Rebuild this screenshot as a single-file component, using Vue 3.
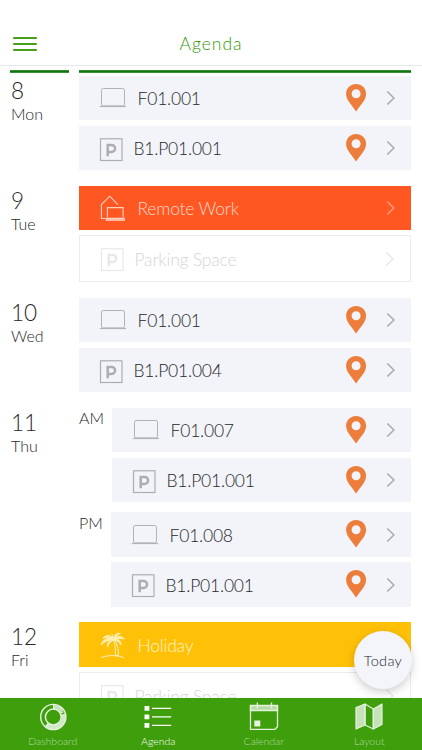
<script setup>
const desk = (label) => ({ kind: 'desk', label })
const park = (label) => ({ kind: 'parking', label })
const free = () => ({ kind: 'parking', label: 'Parking Space', tone: 'empty' })

const days = [
  { num: 8, name: 'Mon', slots: [{ rows: [desk('F01.001'), park('B1.P01.001')] }] },
  { num: 9, name: 'Tue', slots: [{ rows: [{ kind: 'home', label: 'Remote Work', tone: 'remote' }, free()] }] },
  { num: 10, name: 'Wed', slots: [{ rows: [desk('F01.001'), park('B1.P01.004')] }] },
  {
    num: 11,
    name: 'Thu',
    slots: [
      { part: 'AM', rows: [desk('F01.007'), park('B1.P01.001')] },
      { part: 'PM', rows: [desk('F01.008'), park('B1.P01.001')] },
    ],
  },
  { num: 12, name: 'Fri', slots: [{ rows: [{ kind: 'palm', label: 'Holiday', tone: 'holiday' }, free()] }] },
]
const tabs = ['Dashboard', 'Agenda', 'Calendar', 'Layout']
</script>

<template>
  <div class="screen">
    <header class="header">
      <button class="menu" aria-label="Menu"><i></i><i></i><i></i></button>
      <h1>Agenda</h1>
    </header>

    <main class="agenda">
      <div class="rules"><span></span><span></span></div>
      <section v-for="day in days" :key="day.num" class="day">
        <div class="date">
          <div class="num">{{ day.num }}</div>
          <div class="name">{{ day.name }}</div>
        </div>
        <div class="slots">
          <div v-for="(slot, s) in day.slots" :key="s" class="slot" :class="slot.part">
            <div v-if="slot.part" class="part">{{ slot.part }}</div>
            <div class="rows">
              <div v-for="row in slot.rows" :key="row.label" class="row" :class="[row.kind, row.tone]">
                <svg v-if="row.kind === 'desk'" class="icon" width="28" height="22" viewBox="0 0 28 22" fill="none" stroke="#b2b2b6">
                  <rect x="2.5" y="1.5" width="23" height="17.4" rx="1.8" />
                  <path d="M.7 19.5H27" stroke-width="1.2" />
                </svg>
                <svg v-else-if="row.kind === 'parking'" class="icon" width="24" height="24" viewBox="0 0 24 24" fill="none" stroke="currentColor">
                  <rect x="1.5" y="0.8" width="21.5" height="21.7" stroke-width="1.2" />
                  <path d="M8.7 18.3V6.900h3.900a3.500 3.500 0 0 1 0 7H8.700" stroke-width="2.500" />
                </svg>
                <svg v-else-if="row.kind === 'home'" class="icon" width="28" height="28" viewBox="0 0 28 28" fill="none" stroke="#ffd0c0" stroke-width="1.100">
                  <path d="M6.400 24.500H2.400V10.600L10.800 2.200l8 8.400" />
                  <path d="M8.400 23.200V13.600h15.700v9.600" />
                  <path d="M7.200 24.400h18.200v1.900h-18.200z" fill="#ffb499" />
                </svg>
                <svg v-else class="icon" width="28" height="28" viewBox="0 0 28 28" fill="none" stroke="#fff3c9" stroke-width=".9" stroke-linecap="round" stroke-linejoin="round">
                  <g fill="#ffe9a0">
                    <path d="M14 7C11 3.800 6.500 3.800 4 7.200c3-.9 6-.9 9.500.8" />
                    <path d="M13.500 7.500C8 6.800 3.200 9 2.400 13.600 5.500 10.500 9 9 13.500 8.600" />
                    <path d="M13.700 8.400c-4 1.100-6 4-5.200 7.600 1-3.400 2.700-5.200 5.600-7" />
                    <path d="M14.500 7C15 4 17.800 1.800 21.300 2.500c-2.300.7-4 2.100-5.300 4.200" />
                    <path d="M15 7.200c3.500-2.600 8-2.200 10.500.9-3.200-.9-6-.9-9.800.2" />
                    <path d="M15.200 8.200c4-.5 6.800 1.700 6.800 5.700-1.500-2.600-3.600-4.200-6.800-5" />
                    <path d="M14.300 6.600 12.800 3" />
                  </g>
                  <path d="M14.200 8.500c2.200 4.500 2.500 10 2.300 16h3c.2-6-1-11.500-4-15.700M2.500 26.500c6-2.600 15-2.500 22 0" />
                </svg>
                <span class="label">{{ row.label }}</span>
                <svg v-if="!row.tone" class="pin" width="22" height="29" viewBox="0 0 22 29">
                  <path fill="#ed7d3a" fill-rule="evenodd" d="M11.1.1C5.500.1 1.100 4.400 1.100 9.800c0 5.700 4.700 10.300 10 17.700 5.300-7.400 10-12 10-17.700C21.100 4.400 16.700.1 11.100.1Zm0 5.200a4.500 4.500 0 1 1 0 9 4.500 4.500 0 0 1 0-9Z" />
                </svg>
                <svg class="chevron" width="10" height="16" viewBox="0 0 10 16" fill="none" stroke="currentColor" stroke-width="1.500">
                  <path d="M1.300 1.500 7.900 8l-6.600 6.500" />
                </svg>
              </div>
            </div>
          </div>
        </div>
      </section>
    </main>

    <button class="today">Today</button>

    <nav class="tabs">
      <div v-for="tab in tabs" :key="tab" class="tab" :class="{ active: tab === 'Agenda' }">
        <svg v-if="tab === 'Dashboard'" width="30" height="30" viewBox="0 0 30 30" fill="none" stroke="#e4f2de">
          <path d="M16 4.800A10.300 10.300 0 0 1 23.900 9.400" stroke="#c5e2b9" stroke-width="4.600" />
          <path d="M25.200 12A10.300 10.300 0 0 1 8.500 22.800" stroke="#d2e9c8" stroke-width="4.600" />
          <circle cx="15.300" cy="15" r="12.600" stroke-width="1.400" />
          <circle cx="15.300" cy="15" r="7.900" stroke-width="1.500" />
          <path d="M15.600 2.500v4.800M22 11.500l3.500-1.900M10.300 21.200l-2.500 3.500" stroke-width="1.200" />
        </svg>
        <svg v-else-if="tab === 'Agenda'" width="30" height="30" viewBox="0 0 30 30" fill="#fff">
          <path d="M1.500 4h4.800v4.800H1.500zM1.500 12.500h4.800v4.800H1.500zM1.500 21h4.800v4.800H1.500zM9 5.800h19.200v1.200H9zM9 14.300h19.200v1.200H9zM9 22.800h19.200v1.200H9z" />
        </svg>
        <svg v-else-if="tab === 'Calendar'" width="30" height="30" viewBox="0 0 30 30" fill="none" stroke="#e4f2de" stroke-width="1.300">
          <path d="M1.500 3.500h27v5h-27z" fill="#b5daa5" />
          <path d="M1.500 3.500v23.800h24.500l2.500-2.500V3.500M8.300.500v6M22.500.500v6" />
          <path d="M5.300 18.500h6v6h-6z" fill="#e4f2de" stroke="none" />
        </svg>
        <svg v-else width="30" height="30" viewBox="0 0 30 30" stroke="#e4f2de" stroke-width="1.200" stroke-linejoin="round">
          <path d="M2 5.500 11 2v21L2 27ZM19.300 7 28 2v20.500l-8.700 4.500Z" fill="#c5e2b9" />
          <path d="m11 2 8.300 5v20L11 23Z" fill="none" />
        </svg>
        <span>{{ tab }}</span>
      </div>
    </nav>
  </div>
</template>

<style>
body {
  margin: 0;
  background: #fff;
}
</style>

<style scoped>
.screen {
  position: relative;
  width: 422px;
  height: 750px;
  overflow: hidden;
  display: flex;
  flex-direction: column;
  box-sizing: border-box;
  background: #fff;
  color: #27272a;
  font-family: Lato, "Liberation Sans", sans-serif;
  font-weight: 300;
}
button {
  border: 0;
  padding: 0;
  background: none;
  font: inherit;
  color: inherit;
}
.header {
  flex: none;
  display: grid;
  grid-template-columns: 40px 1fr 40px;
  align-items: center;
  height: 66px;
  padding: 22px 0 0;
  box-sizing: border-box;
  border-bottom: 1px solid #e8e8ea;
}
.menu {
  display: flex;
  flex-direction: column;
  gap: 4px;
  width: 24px;
  margin-left: 13px;
}
.menu i {
  height: 2px;
  border-radius: 1px;
  background: #46a01c;
}
.header h1 {
  margin: 0;
  text-align: center;
  font-size: 17.500px;
  line-height: 22px;
  font-weight: 300;
  letter-spacing: 1px;
  color: #359708;
}
.agenda {
  flex: 1;
  min-height: 0;
  overflow: hidden;
  padding: 4px 11px 0 10px;
}
.rules {
  display: grid;
  grid-template-columns: 59px 1fr;
  gap: 10px;
  margin-bottom: 3px;
}
.rules span {
  height: 3px;
  background: linear-gradient(#4c9f4c, #087008 45%, #4c9f4c);
}
.day {
  display: grid;
  grid-template-columns: 69px 1fr;
  margin-bottom: 16px;
}
.day:nth-of-type(4) {
  margin-bottom: 15px;
}
.date {
  padding: 1px 0 0 1px;
}
.num {
  font-size: 22.500px;
  line-height: 27px;
}
.name {
  font-size: 16px;
  line-height: 19px;
}
.slots {
  display: flex;
  flex-direction: column;
  gap: 10px;
}
.slot {
  display: flex;
}
.part {
  flex: none;
  width: 33px;
  font-size: 16px;
  line-height: 20px;
}
.PM .part {
  width: 32px;
  padding-top: 1px;
}
.rows {
  flex: 1;
  display: flex;
  flex-direction: column;
  gap: 6px;
}
.PM .rows,
.rows:has(.empty) {
  gap: 5px;
}
.row {
  display: flex;
  align-items: center;
  height: 44px;
  box-sizing: border-box;
  padding: 0 15px 0 20px;
  background: #f3f4f9;
  color: #27272a;
}
.PM .row,
.row.holiday {
  height: 45px;
}
.icon {
  flex: none;
}
.parking .icon {
  color: #adadb1;
  margin-top: 3px;
}
.label {
  flex: 1;
  margin-left: 10.500px;
  padding-top: 2px;
  font-size: 17.500px;
  line-height: 22px;
  letter-spacing: -0.200px;
  white-space: nowrap;
}
.chevron {
  flex: none;
  margin-left: 19px;
  color: #a9a9ae;
}
.row.remote {
  background: #ff5722;
  color: #ffd9cc;
}
.remote .chevron {
  color: #ff9a78;
}
.row.holiday {
  background: #ffc107;
  color: #fff3c9;
}
.holiday .chevron {
  color: #ffd35a;
}
.row.empty {
  height: 47px;
  border: 1px solid #ececee;
  background: #fff;
  color: #d5d5d7;
}
.empty .icon,
.empty .chevron {
  color: #e8e8ea;
}
.today {
  position: absolute;
  left: 354px;
  top: 631px;
  width: 58px;
  height: 58px;
  border-radius: 50%;
  background: #f4f5fa;
  box-shadow: 0 3px 10px rgba(0, 0, 0, 0.2);
  font-size: 14.500px;
  color: #27272a;
  letter-spacing: 0.300px;
}
.tabs {
  position: relative;
  flex: none;
  display: grid;
  grid-template-columns: repeat(4, 1fr);
  height: 52px;
  background: #3e9e0b;
}
.tab {
  display: flex;
  flex-direction: column;
  align-items: center;
  padding-top: 4px;
  color: #b4d9a2;
  font-size: 10.500px;
  line-height: 14px;
}
.tab span {
  margin-top: 2px;
}
.tab.active {
  color: #fff;
}
</style>
